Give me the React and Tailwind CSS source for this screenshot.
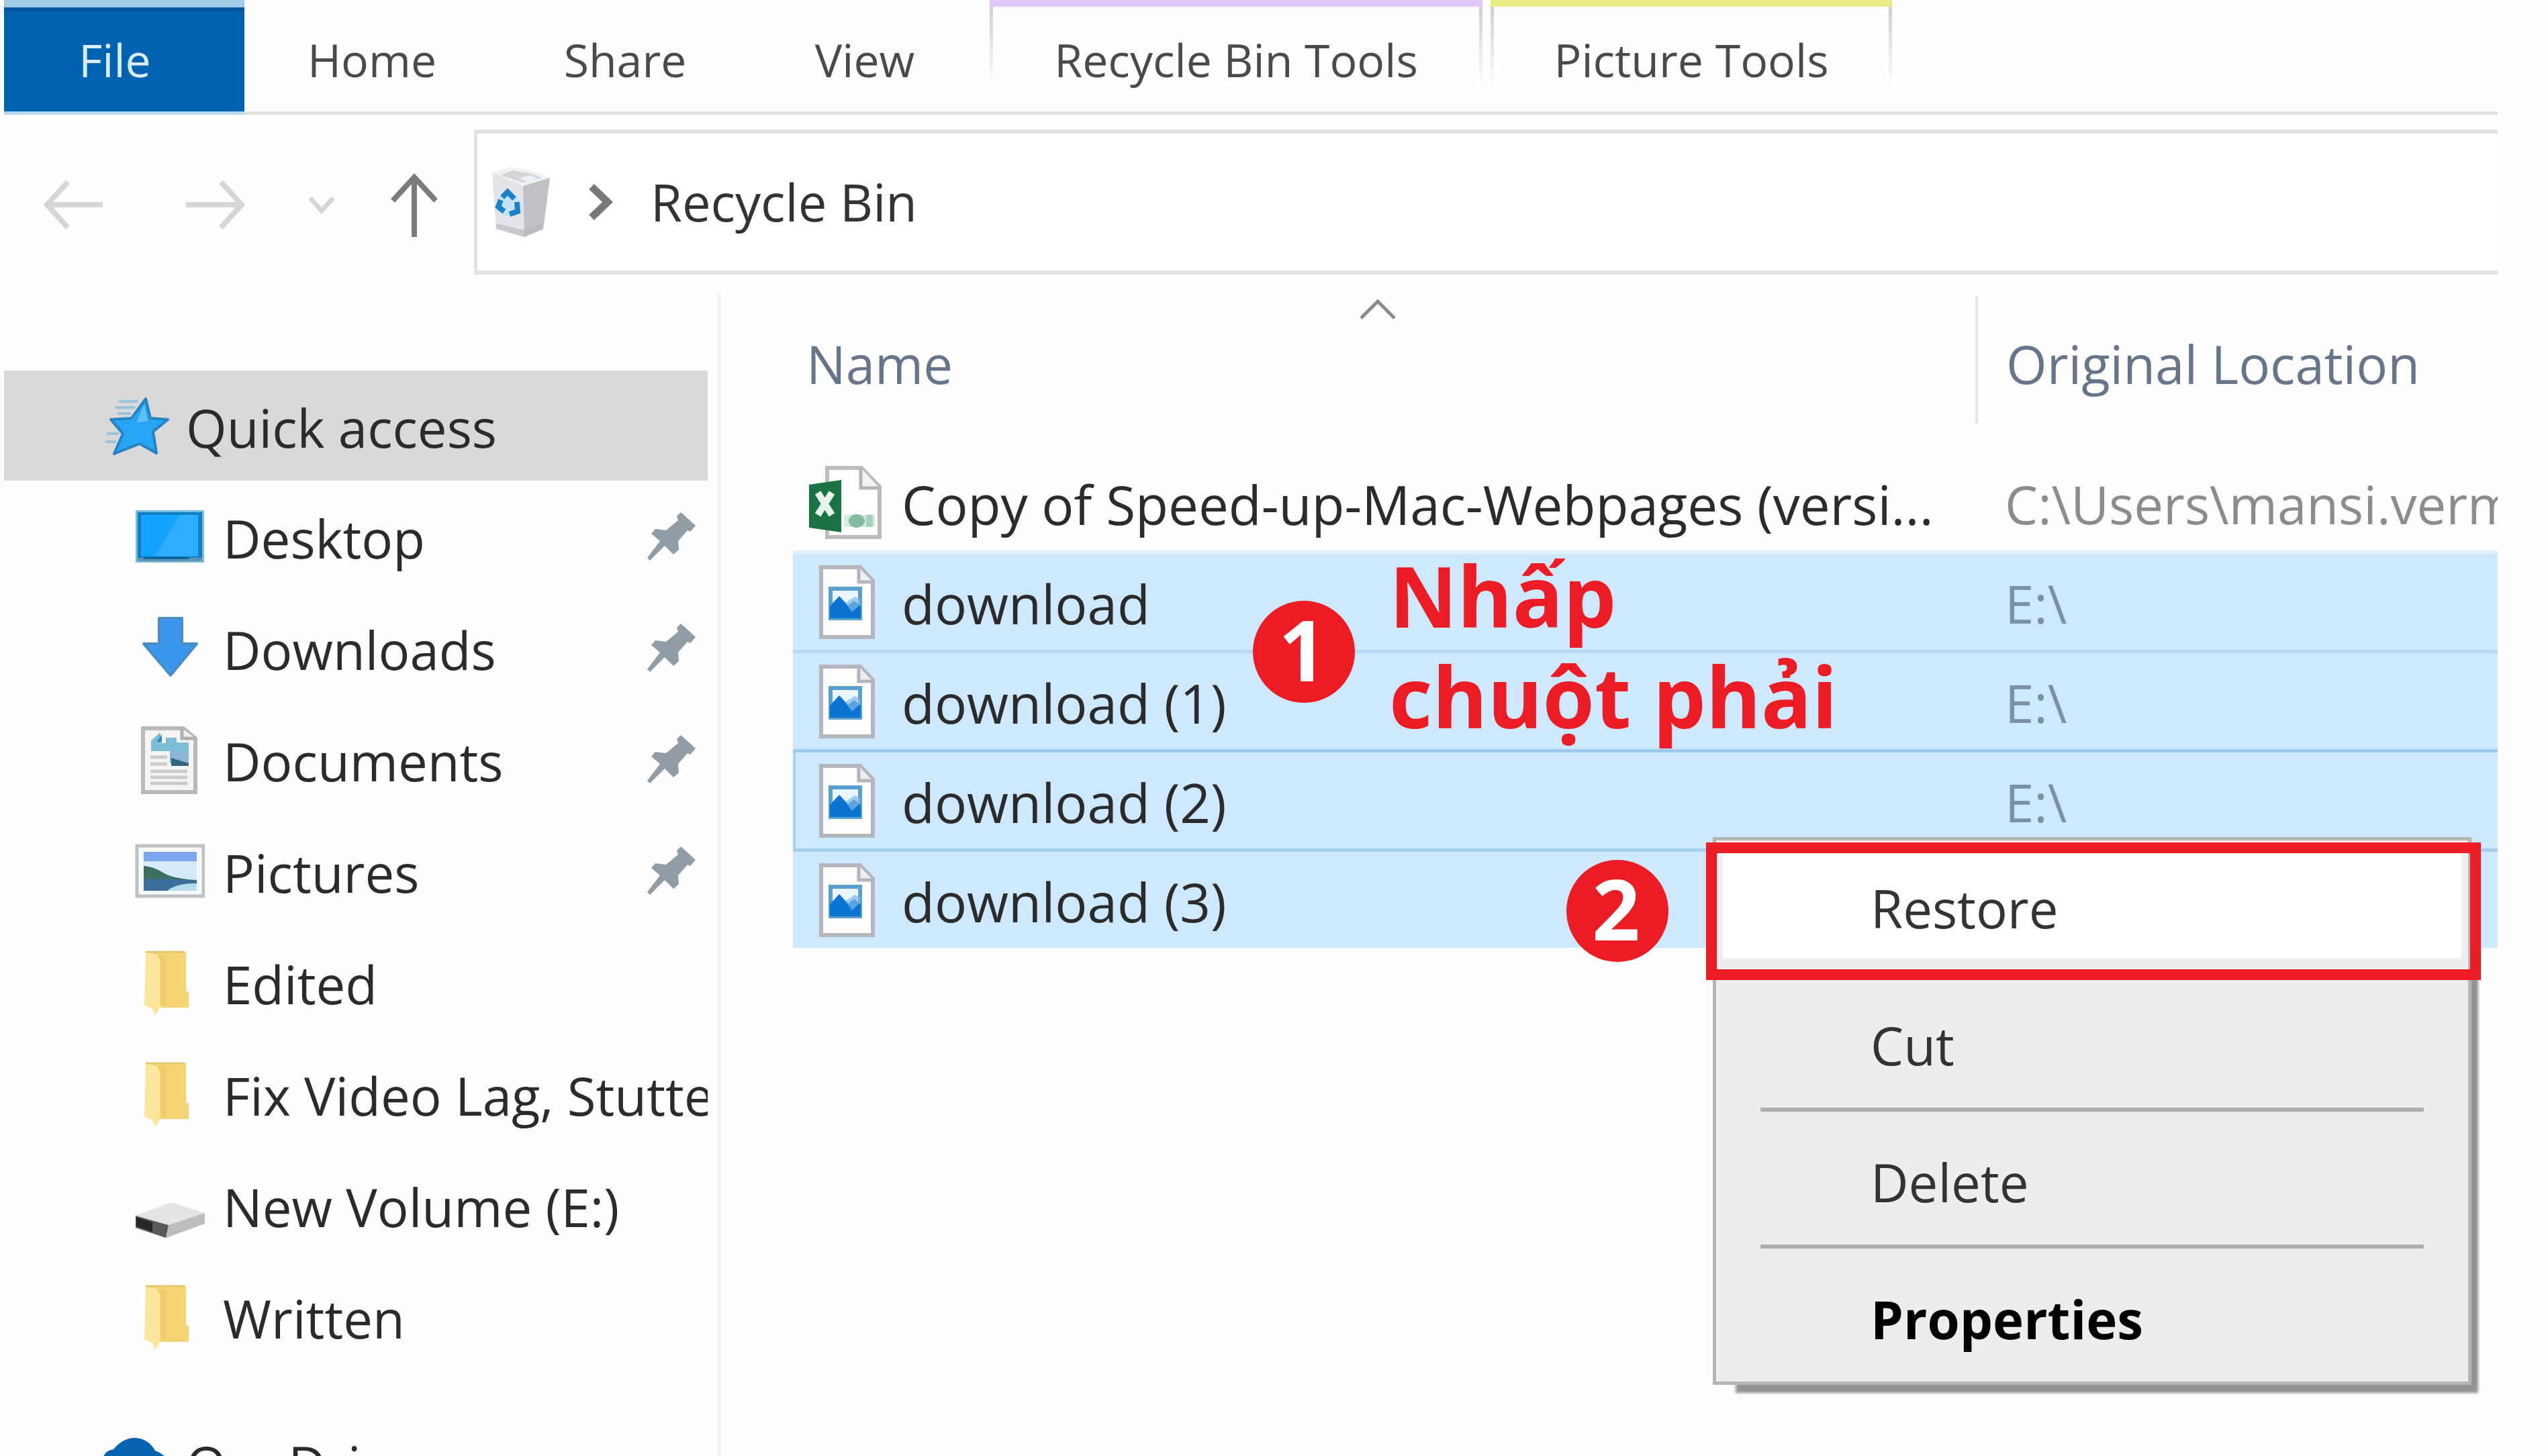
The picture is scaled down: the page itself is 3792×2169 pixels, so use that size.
import React from "react";

const FONT = "font-['Open_Sans','Noto_Sans',sans-serif]";

/* ---------- icons ---------- */

const StarIcon = () => (
  <svg className="h-[104px] w-[100px] shrink-0" viewBox="0 0 100 104" aria-hidden="true">
    <g stroke="#9cc3dc" strokeWidth="4">
      <path d="M22 16H50M16 25H46M20 34H40M4 64H22M2 76H18" />
    </g>
    <path
      d="M62 12 L69 41 L95 43 L73 61 L78 93 L53 79 L15 94 L28 64 L10 43 L41 41 Z"
      fill="#27a5f5"
      stroke="#2584c0"
      strokeWidth="4"
      strokeLinejoin="round"
    />
    <path d="M60 20L65 45L48 48Z" fill="#5cc0fb" />
  </svg>
);

const DesktopIcon = () => (
  <svg className="h-[104px] w-[104px] shrink-0" viewBox="0 0 104 104" aria-hidden="true">
    <rect x="1" y="13" width="102" height="78" fill="#79bfdd" />
    <rect x="4" y="16" width="96" height="72" fill="#1080c4" />
    <rect x="9" y="20" width="85" height="62" fill="#14a3ff" />
    <path d="M94 20V82H30L66 20Z" fill="#2eacff" />
    <rect x="4" y="84" width="96" height="5" fill="#5b93b0" />
    <rect x="14" y="82" width="66" height="4" fill="#0867a4" />
  </svg>
);

const DownloadIcon = () => (
  <svg className="h-[104px] w-[104px] shrink-0" viewBox="0 0 104 104" aria-hidden="true">
    <path
      d="M36 8H70V46H92L53 93L13 46H36Z"
      fill="#3a97ec"
      stroke="#4a8cc4"
      strokeWidth="4"
      strokeLinejoin="round"
    />
  </svg>
);

const DocumentIcon = () => (
  <svg className="h-[104px] w-[104px] shrink-0" viewBox="0 0 104 104" aria-hidden="true">
    <path d="M12 6H72L90 21V101H12Z" fill="#f4f4f4" stroke="#b9b9b9" strokeWidth="6" />
    <path d="M70 6V21H90" fill="#eeeeee" stroke="#b0b0b0" strokeWidth="5" />
    <path d="M24 24L38 12V28H46V20H62V27H80V40H24Z" fill="#7dbdd6" />
    <path d="M32 26L40 15V27Z" fill="#3f87bd" />
    <path d="M52 40H80V58H52Z" fill="#8cb4d6" />
    <path d="M54 50L70 55L80 58V62H54Z" fill="#2f6780" />
    <path d="M23 49H48M23 59H48M23 70H78M23 79H78M23 88H78" stroke="#cbcbcb" strokeWidth="5" />
  </svg>
);

const PictureIcon = () => (
  <svg className="h-[104px] w-[104px] shrink-0" viewBox="0 0 104 104" aria-hidden="true">
    <rect x="3" y="15" width="99" height="75" fill="#f6f8fa" stroke="#bfc2c4" strokeWidth="5" />
    <rect x="13" y="24" width="79" height="58" fill="#d5ebfb" />
    <rect x="13" y="24" width="79" height="14" fill="#7da5ee" />
    <path d="M13 45Q28 46 42 55T92 66V70H13Z" fill="#3c7060" />
    <path d="M13 65Q50 62 92 68V72Q70 72 60 82H13Z" fill="#3c6f9c" />
    <path d="M48 82Q62 70 92 71V82Z" fill="#b5dcec" />
  </svg>
);

const FolderIcon = () => (
  <svg className="h-[104px] w-[104px] shrink-0" viewBox="0 0 104 104" aria-hidden="true">
    <path d="M16 7H76V66H80V90H32Z" fill="#f5d473" />
    <path d="M34 12H46V86H34Z" fill="#e9bf5a" opacity="0.4" />
    <path d="M16 7L28 10Q38 13 38 25V88L30 102L26 92L14 86Z" fill="#fce69c" />
    <path d="M16 7H74" stroke="#e3c871" strokeWidth="3" />
  </svg>
);

const DriveIcon = () => (
  <svg className="h-[104px] w-[104px] shrink-0" viewBox="0 0 104 104" aria-hidden="true">
    <path d="M1 68L48 50Q54 48 60 50L104 64L50 82Z" fill="#e4e4e4" />
    <path d="M50 82L104 64V80L46 101Z" fill="#bdbdbd" />
    <path d="M1 68L50 82L46 101L1 86Z" fill="#5a5a5a" />
    <path d="M2 70L26 78V92L2 84Z" fill="#262626" />
  </svg>
);

const CloudIcon = () => (
  <svg className="h-[104px] w-[100px] shrink-0" viewBox="0 0 100 104" aria-hidden="true">
    <path d="M0 62Q-8 36 14 32Q28 15 46 15Q66 16 76 34Q98 42 98 64Q96 84 78 84H16Q2 84 0 62Z" fill="#0a62b2" />
  </svg>
);

const PinIcon = () => (
  <svg className="h-[72px] w-[72px] shrink-0" viewBox="0 0 72 72" aria-label="Pinned">
    <path
      d="M50 0L72 20L64 29L60 27L46 43L47 56L39 63L26 50L4 72L0 68L19 43L6 32L12 25L28 27L46 12L44 6Z"
      fill="#929ca4"
    />
  </svg>
);

const ExcelIcon = () => (
  <svg className="h-[112px] w-[112px] shrink-0" viewBox="0 0 112 112" aria-hidden="true">
    <path d="M29 4H80L107 32V107H29Z" fill="#ffffff" stroke="#bcbcbc" strokeWidth="6" />
    <path d="M79 4V34H107" fill="#f4f4f4" stroke="#b4b4b4" strokeWidth="5" />
    <rect x="54" y="74" width="46" height="18" fill="#d8ebe0" />
    <ellipse cx="73" cy="83" rx="12" ry="10" fill="#85bb9f" />
    <rect x="87" y="74" width="10" height="18" fill="#a8d0bb" />
    <path d="M2 29L50 22V100L2 93Z" fill="#1a7343" />
    <path d="M15 41L36 74M36 41L15 74" stroke="#e8f3ec" strokeWidth="10" />
  </svg>
);

const JpegIcon = () => (
  <svg className="h-[112px] w-[112px] shrink-0" viewBox="0 0 112 112" aria-hidden="true">
    <path d="M20 4H78L97 24V108H20Z" fill="#fdfdfd" stroke="#b3b7bd" strokeWidth="6" />
    <path d="M76 4V26H97" fill="#eceef0" stroke="#b3b7bd" strokeWidth="5" />
    <rect x="31" y="33" width="50" height="50" fill="#5aa0cc" />
    <rect x="37" y="39" width="38" height="38" fill="#eaf6fd" />
    <path d="M33 62L47 47L60 61L69 54L79 62V80H33Z" fill="#0b74d1" />
    <path d="M56 57L66 71L78 60V52L70 48Z" fill="#7db8e6" opacity="0.7" />
  </svg>
);

const BinIcon = () => (
  <svg className="h-[108px] w-[90px] shrink-0" viewBox="0 0 90 108" aria-hidden="true">
    <path d="M2 10L30 2L62 8L88 18L78 94L50 106L8 94Z" fill="#e3e4e8" />
    <path d="M48 28L88 18L78 94L50 106Z" fill="#bfc1c6" />
    <path d="M2 10L30 2L62 8L88 18L48 30Z" fill="#f2f2f3" />
    <path d="M14 14L32 7L58 11L76 18L48 25Z" fill="#d3d5d8" />
    <path d="M42 18L60 14L70 19L52 24Z" fill="#e6f4fb" />
    <path d="M8 94L30 100L50 106L78 94L76 86L50 96L8 86Z" fill="#b4b6ba" opacity="0.6" />
    <circle cx="26" cy="57" r="18" fill="#c3e3fa" />
    <path
      d="M17 47L25 39L35 49M39 54L40 68L28 72M20 68L11 61L15 51"
      fill="none"
      stroke="#1c80c8"
      strokeWidth="8"
    />
  </svg>
);

const Arrow = ({ d, box, className }) => (
  <svg className={className} viewBox={box} fill="none" stroke="currentColor" aria-hidden="true">
    <path d={d} />
  </svg>
);

/* ---------- data ---------- */

const TABS = [
  { label: "Home", width: "w-[380px]" },
  { label: "Share", width: "w-[374px]" },
  { label: "View", width: "w-[340px]" },
];

const TOOL_TABS = [
  { label: "Recycle Bin Tools", width: "w-[734px]", bar: "border-[#e3c8fb]" },
  { label: "Picture Tools", width: "w-[598px]", bar: "border-[#e9ec82]" },
];

const PLACES = [
  { label: "Desktop", Icon: DesktopIcon, pinned: true },
  { label: "Downloads", Icon: DownloadIcon, pinned: true },
  { label: "Documents", Icon: DocumentIcon, pinned: true },
  { label: "Pictures", Icon: PictureIcon, pinned: true },
  { label: "Edited", Icon: FolderIcon },
  { label: "Fix Video Lag, Stutter", Icon: FolderIcon },
  { label: "New Volume (E:)", Icon: DriveIcon },
  { label: "Written", Icon: FolderIcon },
];

const PLAIN = "border-transparent text-[#8c8c8c]";
const SELECTED = "bg-[#cde8ff] text-[#7a90a8]";

const FILES = [
  { name: "Copy of Speed-up-Mac-Webpages (versi...", place: "C:\\Users\\mansi.verma", Icon: ExcelIcon, style: PLAIN },
  { name: "download", place: "E:\\", Icon: JpegIcon, style: SELECTED + " border-[#e0f1ff]" },
  { name: "download (1)", place: "E:\\", Icon: JpegIcon, style: SELECTED + " border-[#b8d8f3]" },
  { name: "download (2)", place: "E:\\", Icon: JpegIcon, style: SELECTED + " border-[#9ccbeb]", focused: true },
  { name: "download (3)", place: "E:\\", Icon: JpegIcon, style: SELECTED + " border-[#a5d0ef]" },
];

/* ---------- parts ---------- */

function Ribbon() {
  return (
    <div role="tablist" className="flex h-[171px] items-stretch border-b-[5px] border-[#e3e3e3] text-[68px] leading-[92px] text-[#4a4a4a]">
      <button type="button" role="tab" className="-mb-[5px] w-[358px] border-t-[11px] border-b-[5px] border-t-[#9fcbe6] border-b-[#bcd9ee] bg-[#0063b1] pr-7 text-[#d9ecf8] shadow-[inset_0_6px_0_#00569e]">
        File
      </button>
      {TABS.map((t) => (
        <button key={t.label} type="button" role="tab" className={`${t.width} pt-3`}>
          {t.label}
        </button>
      ))}
      <div className="ml-4 flex gap-3">
        {TOOL_TABS.map((t) => (
          <div key={t.label} className={`${t.width} ${t.bar} flex border-t-[10px]`}>
            <span className="h-[120px] w-[5px] bg-linear-to-b from-[#d0d0d0] to-transparent" />
            <button type="button" role="tab" className="flex-1 pt-0.5 whitespace-nowrap">
              {t.label}
            </button>
            <span className="h-[120px] w-[5px] bg-linear-to-b from-[#d0d0d0] to-transparent" />
          </div>
        ))}
      </div>
    </div>
  );
}

function AddressBar() {
  return (
    <div className="mt-[22px] flex h-[216px] items-center">
      <div className="flex w-[700px] shrink-0 items-center pt-2 pl-[59px] text-[#d6d6d6]">
        <button type="button" aria-label="Back">
          <Arrow className="h-[76px] w-[88px] stroke-[8]" box="0 0 88 76" d="M88 38H6M36 4L5 38L36 72" />
        </button>
        <button type="button" aria-label="Forward" className="ml-[124px]">
          <Arrow className="h-[76px] w-[88px] stroke-[8]" box="0 0 88 76" d="M0 38H82M52 4L83 38L52 72" />
        </button>
        <button type="button" aria-label="Recent locations" className="ml-[94px]">
          <Arrow className="h-[28px] w-[40px] stroke-[7]" box="0 0 40 28" d="M3 4L20 23L37 4" />
        </button>
        <button type="button" aria-label="Up" className="ml-[82px] text-[#7b7b7b]">
          <Arrow className="h-[96px] w-[72px] stroke-[8]" box="0 0 72 96" d="M36 96V6M4 42L36 7L68 42" />
        </button>
      </div>
      <div className="flex h-full min-w-0 flex-1 items-center border-y-[6px] border-l-[5px] border-[#e2e2e2] bg-white pl-5">
        <BinIcon />
        <Arrow className="ml-[54px] h-[56px] w-[38px] stroke-[11] text-[#787878]" box="0 0 38 56" d="M6 5L30 28L6 51" />
        <a href="#recycle-bin" className="ml-[56px] text-[76px] leading-[106px] text-[#333333]">
          Recycle Bin
        </a>
      </div>
    </div>
  );
}

function Sidebar() {
  return (
    <nav className="w-[1068px] shrink-0 border-r-[6px] border-[#f3f3f3] pt-[115px] pr-[14px] text-[78px] leading-[106px] text-[#2b2b2b]">
      <a href="#quick-access" className="flex h-[164px] items-center gap-[22px] bg-[#d9d9d9] pl-[149px]">
        <StarIcon />
        <span className="pt-1.5">Quick access</span>
      </a>
      <ul>
        {PLACES.map(({ label, Icon, pinned }) => (
          <li key={label}>
            <a href="#place" className="flex h-[166px] items-center gap-[27px] pl-[195px]">
              <Icon />
              <span className="min-w-0 flex-1 overflow-hidden pt-1.5 whitespace-nowrap">{label}</span>
              {pinned && (
                <span className="pr-[18px]">
                  <PinIcon />
                </span>
              )}
            </a>
          </li>
        ))}
      </ul>
      <a href="#onedrive" className="mt-[52px] flex h-[166px] items-center gap-[22px] pl-[149px]">
        <CloudIcon />
        <span className="pt-1.5">OneDrive</span>
      </a>
    </nav>
  );
}

function FileTable() {
  return (
    <div className="ml-[107px] min-w-0 flex-1 overflow-hidden">
      <table className="w-full table-fixed border-separate border-spacing-0 text-left text-[78px] leading-[106px]">
        <thead className="text-[#66758a]">
          <tr>
            <th scope="col" className="relative h-[231px] w-[1761px] p-0 align-top font-normal">
              <Arrow className="absolute top-1 left-1/2 h-[32px] w-[56px] -translate-x-[38px] stroke-[5] text-[#8a8a8a]" box="0 0 56 32" d="M3 29L28 4L53 29" />
              <div className="flex h-[190px] items-center pt-3 pl-[20px]">Name</div>
            </th>
            <th scope="col" className="p-0 align-top font-normal">
              <div className="flex h-[190px] items-center border-l-[4px] border-[#e4e4e4] pt-3 pl-[42px] whitespace-nowrap">
                Original Location
              </div>
            </th>
          </tr>
        </thead>
        <tbody>
          {FILES.map(({ name, place, Icon, style, focused }) => (
            <tr key={name}>
              <td className={`h-[148px] border-t-[5px] p-0 ${style}`}>
                <div className={`flex h-[143px] items-center gap-[28px] whitespace-nowrap text-[80px] text-[#2b2b2b] ${focused ? "border-l-[4px] border-[#a9d3f2] pl-[18px]" : "pl-[22px]"}`}>
                  <Icon />
                  <span className="pt-1">{name}</span>
                </div>
              </td>
              <td className={`h-[148px] overflow-hidden border-t-[5px] p-0 ${style}`}>
                <div className="pt-1 pl-[44px] whitespace-nowrap">{place}</div>
              </td>
            </tr>
          ))}
        </tbody>
      </table>
    </div>
  );
}

function ContextMenu() {
  const item = "flex h-[162px] w-full items-center pt-3 pl-[220px]";
  const rule = "mx-[56px] my-[18px] h-[6px] border-0 bg-[#adadad]";
  return (
    <div
      role="menu"
      className="absolute top-[1247px] left-[2551px] w-[1130px] border-[5px] border-[#b5b5b5] bg-[#ededed] px-[10px] pt-[14px] pb-[18px] text-[78px] leading-[106px] text-[#333333] shadow-[22px_24px_4px_-12px_#939393]"
    >
      <button type="button" role="menuitem" className={`${item} mb-[42px] bg-white`}>Restore</button>
      <button type="button" role="menuitem" className={item}>Cut</button>
      <hr className={rule} />
      <button type="button" role="menuitem" className={item}>Delete</button>
      <hr className={rule} />
      <button type="button" role="menuitem" className={`${item} font-bold text-black`}>Properties</button>
    </div>
  );
}

const Badge = ({ children, className }) => (
  <div className={`absolute flex h-[152px] w-[152px] items-center justify-center rounded-full bg-[#ec1c24] pr-1 pb-2 text-[125px] leading-[144px] font-bold text-white ${className}`}>
    {children}
  </div>
);

export default function App() {
  return (
    <div className={`relative flex h-screen flex-col overflow-hidden bg-[#fefefe] pr-[72px] pl-1.5 ${FONT}`}>
      <Ribbon />
      <AddressBar />
      <div className="mt-7 flex min-h-0 flex-1">
        <Sidebar />
        <div className="flex min-w-0 flex-1 pt-1">
          <FileTable />
        </div>
      </div>

      <ContextMenu />
      <div className="pointer-events-none absolute top-[1255px] left-[2541px] h-[205px] w-[1154px] border-[16px] border-[#ec1c24]" />
      <Badge className="top-[895px] left-[1866px]">1</Badge>
      <Badge className="top-[1281px] left-[2333px]">2</Badge>
      <p className="absolute top-[812px] left-[2069px] text-[125px] leading-[150px] font-bold whitespace-nowrap text-[#ec1c24]">
        Nhấp
        <br />
        chuột phải
      </p>
    </div>
  );
}
